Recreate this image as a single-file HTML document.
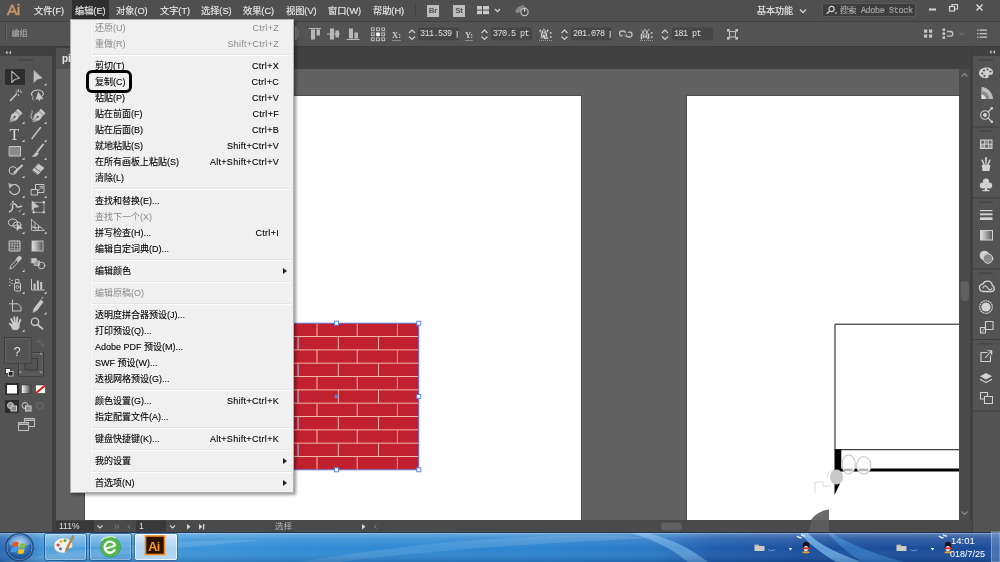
<!DOCTYPE html>
<html lang="zh-CN">
<head>
<meta charset="utf-8">
<title>Adobe Illustrator</title>
<style>
*{box-sizing:border-box;margin:0;padding:0}
html,body{width:1000px;height:562px;overflow:hidden;background:#535353}
body{position:relative;font-family:"Liberation Sans","Noto Sans CJK SC",sans-serif;font-size:9px;color:#d8d8d8;-webkit-font-smoothing:antialiased}
.abs{position:absolute}
#menubar{left:0;top:0;width:1000px;height:21px;background:#4f4f4f}
#menubar .mi{position:absolute;top:.5px;height:20px;line-height:20px;font-size:9.2px;color:#e8e8e8;white-space:nowrap;-webkit-text-stroke:.15px #e8e8e8}
#ctrl{left:0;top:20.5px;width:1000px;height:26.5px;background:#535353;border-top:1.5px solid #414141;border-bottom:1px solid #3c3c3c}
#tabbar{left:0;top:47px;width:1000px;height:22px;background:#414141}
#canvas{left:56px;top:69px;width:903px;height:451px;background:#616161;overflow:hidden}
.art{position:absolute;background:#fff;box-shadow:0 0 0 1px #4e4e4e}
#tools{left:0;top:47px;width:52px;height:485px;background:#535353}
#toolsgap{left:52px;top:47px;width:4px;height:485px;background:#3f3f3f}
#status{left:56px;top:520px;width:916px;height:11px;background:#3c3c3c}
#vscroll{left:959px;top:69px;width:11px;height:451px;background:#4b4b4b}
#rgap{left:970px;top:47px;width:3px;height:485px;background:#3f3f3f}
#rpanel{left:973px;top:56px;width:27px;height:476px;background:#535353}
#taskbar{left:0;top:531px;width:1000px;height:31px;background:linear-gradient(90deg,#4a97d6 0%,#3f8fd2 25%,#2f7fca 45%,#2467b6 60%,#1d55a3 75%,#1c4f9b 100%)}
/* dropdown menu */
#menu{left:70px;top:19px;width:224px;height:474px;background:#f0f0f0;border:1px solid #b0b0b0;box-shadow:2px 2px 3px rgba(0,0,0,.4);color:#000}
#menu .it{position:absolute;left:0;width:222px;height:16px;line-height:16px;font-size:9px;white-space:nowrap;-webkit-text-stroke:.1px currentColor}
#menu .it .l{position:absolute;left:24px;top:0}
#menu .it .r{position:absolute;right:14px;top:0;letter-spacing:.3px}
#menu .it.dis{color:#8a8a8a;-webkit-text-stroke:0}
#menu .sep{position:absolute;left:21px;width:199px;background:#e5e5e5;border-bottom:1px solid #fcfcfc;height:2px}
#menu .arr{position:absolute;right:6px;top:5px;width:0;height:0;border-left:4px solid #222;border-top:3px solid transparent;border-bottom:3px solid transparent}

#menu .gut{position:absolute;left:19px;top:1px;height:470px;background:#eaeaea;border-right:1px solid #f8f8f8;width:2px}
#menu .hl{position:absolute;left:15px;top:50px;width:46px;height:23px;border:3px solid #000;border-radius:6px}
.ailogo{position:absolute;left:7px;top:-.5px;font-size:15.5px;line-height:20px;color:#cc9468;font-weight:400;letter-spacing:-0.6px;-webkit-text-stroke:.5px #cc9468}
.mhl{position:absolute;left:72px;top:0;width:37px;height:19px;background:#2f2f2f}

.ct{position:absolute;top:28.5px;height:13px;line-height:13px;font-size:9px;color:#d4d4d4;white-space:nowrap;overflow:hidden}
.ct.lb{font-family:"Liberation Serif","Noto Serif CJK SC",serif;font-size:8.5px;font-weight:bold;border-bottom:1px solid #8a8a8a;height:12px;line-height:12px;color:#cfcfcf}
.ct.lb.cj{font-size:10px;font-family:"Noto Serif CJK SC",serif;font-weight:900;top:27.5px;height:13px;border-bottom:1px dotted #9a9a9a}
.ct.nm{font-family:"Liberation Mono",monospace;font-size:8.5px;letter-spacing:-0.6px;color:#e0e0e0;top:27.5px}

.bx{top:5px;width:12px;height:12px;background:#bdbdbd;color:#555;font-size:8px;line-height:12px;text-align:center;font-weight:bold;letter-spacing:-0.3px}
.st{position:absolute;top:521px;height:11px;line-height:11px;font-size:8.5px;color:#e0e0e0;white-space:nowrap}
#root{position:absolute;left:0;top:0;width:1000px;height:562px;will-change:transform}
</style>
</head>
<body>
<div id="root">
<div id="menubar" class="abs">
<div class="ailogo">Ai</div>
<div class="mhl"></div>
<span class="mi" style="left:34px">文件(F)</span>
<span class="mi" style="left:75px">编辑(E)</span>
<span class="mi" style="left:116px">对象(O)</span>
<span class="mi" style="left:160px">文字(T)</span>
<span class="mi" style="left:201px">选择(S)</span>
<span class="mi" style="left:243px">效果(C)</span>
<span class="mi" style="left:286px">视图(V)</span>
<span class="mi" style="left:328px">窗口(W)</span>
<span class="mi" style="left:373px">帮助(H)</span>
<div class="abs" style="left:415px;top:3px;width:1px;height:14px;background:#434343"></div>
<div class="abs bx" style="left:427px">Br</div>
<div class="abs bx" style="left:453px">St</div>
<svg class="abs" style="left:476px;top:4px" width="60" height="14" viewBox="0 0 60 14">
<g fill="#c9c9c9"><rect x="1" y="2" width="5" height="3.6"/><rect x="1" y="6.6" width="5" height="3.6"/><rect x="7" y="2" width="6" height="3.6"/><rect x="7" y="6.6" width="6" height="3.6"/></g>
<path d="M19 5l2.5 2.5l2.5 -2.5" fill="none" stroke="#d0d0d0" stroke-width="1.3"/>
<g fill="#9a9a9a"><path d="M39 8c1-4 5-7 9-7c0 3-3 7-6 8z" opacity=".75"/><circle cx="48.5" cy="8" r="3.6" fill="#4a4a4a" stroke="#bdbdbd" stroke-width="1.2"/><rect x="48" y="3.2" width="1.2" height="4.5" fill="#d0d0d0"/></g>
</svg>
<span class="mi" style="left:757px;font-size:9px">基本功能</span>
<svg class="abs" style="left:798px;top:6px" width="10" height="10" viewBox="0 0 10 10"><path d="M2 3.5l3 3l3 -3" fill="none" stroke="#d0d0d0" stroke-width="1.3"/></svg>
<div class="abs" style="left:822px;top:3px;width:94px;height:14px;background:#3d3d3d;border:1px solid #5a5a5a;border-radius:2px"></div>
<svg class="abs" style="left:825px;top:4px" width="14" height="12" viewBox="0 0 14 12"><circle cx="6.5" cy="5" r="2.6" fill="none" stroke="#cfcfcf" stroke-width="1.2"/><path d="M4.5 7.2l-2.8 2.6" stroke="#cfcfcf" stroke-width="1.4"/><path d="M9.5 8.5h3l-1.5 1.6z" fill="#cfcfcf"/></svg>
<span class="mi" style="left:840px;font-size:8.5px;color:#757575;font-family:'Liberation Mono','Noto Sans CJK SC',monospace;letter-spacing:-0.4px">搜索 Adobe Stock</span>
<svg class="abs" style="left:920px;top:0" width="80" height="20" viewBox="0 0 80 20">
<rect x="9" y="8.500" width="7" height="2" fill="#d6d6d6"/>
<g fill="none" stroke="#d6d6d6" stroke-width="1.200"><rect x="29.500" y="6.500" width="5" height="4.500"/><path d="M32 6.500v-2h5.500v4.500h-3"/></g>
<path d="M56.500 4.500l6 6M62.500 4.500l-6 6" stroke="#d6d6d6" stroke-width="1.500"/>
</svg>

</div>
<div id="ctrl" class="abs"></div>
<svg class="abs" style="left:0;top:20px" width="1000" height="27" viewBox="0 0 1000 27">
<path d="M5.5 5v17" stroke="#3a3a3a" stroke-width="1" stroke-dasharray="1 1"/><path d="M6.5 5v17" stroke="#6e6e6e" stroke-width="1" stroke-dasharray="1 1"/>
<rect x="295" y="6" width="1.5" height="14" fill="#8a8a8a"/><rect x="297.5" y="9" width="1" height="8" fill="#777"/>
<rect x="309" y="8" width="12" height="1" fill="#b9b9b9"/><rect x="311" y="9.5" width="4" height="10" fill="#b9b9b9"/><rect x="316.5" y="9.5" width="3.5" height="6" fill="#b9b9b9"/>
<rect x="327" y="13.5" width="13" height="1" fill="#b9b9b9"/><rect x="330" y="8.5" width="4" height="11" fill="#b9b9b9"/><rect x="335.5" y="10.5" width="3.5" height="7" fill="#b9b9b9"/>
<rect x="346.5" y="19" width="13" height="1" fill="#b9b9b9"/><rect x="349" y="8.5" width="4" height="10" fill="#b9b9b9"/><rect x="354.5" y="12.5" width="3.5" height="6" fill="#b9b9b9"/>
<rect x="371.4" y="7.9" width="2.8" height="2.8" fill="none" stroke="#c4c4c4" stroke-width="0.9"/>
<rect x="371.4" y="12.9" width="2.8" height="2.8" fill="none" stroke="#c4c4c4" stroke-width="0.9"/>
<rect x="371.4" y="17.9" width="2.8" height="2.8" fill="none" stroke="#c4c4c4" stroke-width="0.9"/>
<rect x="376.6" y="7.9" width="2.8" height="2.8" fill="none" stroke="#c4c4c4" stroke-width="0.9"/>
<rect x="376.2" y="12.5" width="3.6" height="3.6" fill="#fff"/>
<rect x="376.6" y="17.9" width="2.8" height="2.8" fill="none" stroke="#c4c4c4" stroke-width="0.9"/>
<rect x="381.8" y="7.9" width="2.8" height="2.8" fill="none" stroke="#c4c4c4" stroke-width="0.9"/>
<rect x="381.8" y="12.9" width="2.8" height="2.8" fill="none" stroke="#c4c4c4" stroke-width="0.9"/>
<rect x="381.8" y="17.9" width="2.8" height="2.8" fill="none" stroke="#c4c4c4" stroke-width="0.9"/>
<rect x="418" y="7.5" width="41" height="13" rx="1.5" fill="#464646"/>
<rect x="491" y="7.5" width="41" height="13" rx="1.5" fill="#464646"/>
<rect x="571" y="7.5" width="41" height="13" rx="1.5" fill="#464646"/>
<rect x="672" y="7.5" width="41" height="13" rx="1.5" fill="#464646"/>
<path d="M409 13 l3 -3 l3 3 M409 16.5 l3 3 l3 -3" fill="none" stroke="#d0d0d0" stroke-width="1.2"/>
<path d="M481.5 13 l3 -3 l3 3 M481.5 16.5 l3 3 l3 -3" fill="none" stroke="#d0d0d0" stroke-width="1.2"/>
<path d="M561.5 13 l3 -3 l3 3 M561.5 16.5 l3 3 l3 -3" fill="none" stroke="#d0d0d0" stroke-width="1.2"/>
<path d="M662 13 l3 -3 l3 3 M662 16.5 l3 3 l3 -3" fill="none" stroke="#d0d0d0" stroke-width="1.2"/>
<g fill="none" stroke="#bdbdbd" stroke-width="1.3"><rect x="619.5" y="11" width="6" height="5" rx="2.5"/><rect x="626" y="12" width="6" height="5" rx="2.5"/><path d="M621 19l9 -10" stroke="#535353" stroke-width="1.6"/></g>
<g fill="#c4c4c4"><rect x="727" y="9" width="2.6" height="2.6"/><rect x="735.4" y="9" width="2.6" height="2.6"/><rect x="727" y="17" width="2.6" height="2.6"/><rect x="735.4" y="17" width="2.6" height="2.6"/><rect x="729.5" y="11.6" width="6" height="5.4" fill="none" stroke="#c4c4c4" stroke-width="1"/></g>
<g fill="#c4c4c4"><rect x="924" y="9.5" width="3.2" height="3.2"/><rect x="929" y="9.5" width="3.2" height="3.2"/><rect x="924" y="14.5" width="3.2" height="3.2"/><rect x="929" y="14.5" width="3.2" height="3.2"/></g>
<g fill="#c4c4c4"><rect x="942.5" y="8.5" width="2.6" height="2.6"/><rect x="942.5" y="12.4" width="2.6" height="2.6"/><rect x="942.5" y="16.3" width="2.6" height="2.6"/></g><path d="M947 11.5h3.5a2.3 2.3 0 0 1 0 4.6H947" fill="none" stroke="#c4c4c4" stroke-width="1.3"/>
<path d="M959.5 12.5l2.5 2.5l2.5 -2.5" fill="none" stroke="#6f6f6f" stroke-width="1.1"/>
<g fill="#c4c4c4"><rect x="977" y="9.5" width="1.5" height="1.3"/><rect x="979.5" y="9.5" width="7.5" height="1.3"/><rect x="977" y="13" width="1.5" height="1.3"/><rect x="979.5" y="13" width="7.5" height="1.3"/><rect x="977" y="16.5" width="1.5" height="1.3"/><rect x="979.5" y="16.5" width="7.5" height="1.3"/></g>
</svg>
<span class="ct" style="left:11.5px;top:27px;font-size:8px;color:#bdbdbd">编组</span>
<span class="ct lb" style="left:392px">X:</span>
<span class="ct nm" style="left:420px;width:38px">311.539 p</span>
<span class="ct lb" style="left:465px">Y:</span>
<span class="ct nm" style="left:493px;width:38px">370.5 pt</span>
<span class="ct lb cj" style="left:539px">宽:</span>
<span class="ct nm" style="left:573px;width:38px">201.078 p</span>
<span class="ct lb cj" style="left:640px">高:</span>
<span class="ct nm" style="left:674px;width:38px">181 pt</span>
<div id="tabbar" class="abs"></div>
<div class="abs" style="left:54px;top:48px;width:180px;height:21px;background:#515151;color:#e6e6e6;font-size:10px;line-height:21px;padding-left:8px;font-weight:bold;overflow:hidden;white-space:nowrap">pi</div>
<div id="canvas" class="abs">
  <div class="art" style="left:29px;top:27px;width:496px;height:424px"></div>
  <div class="art" style="left:631px;top:27px;width:272px;height:424px"></div>
</div>
<!--ART--><svg class="abs" style="left:56px;top:69px" width="903" height="451" viewBox="56 69 903 451">
<rect x="257.9" y="323.2" width="160.9" height="146.6" fill="#c1202e"/>
<path d="M257.9 336.53H418.8 M257.9 349.86H418.8 M257.9 363.19H418.8 M257.9 376.52H418.8 M257.9 389.85H418.8 M257.9 403.18H418.8 M257.9 416.51H418.8 M257.9 429.84H418.8 M257.9 443.17H418.8 M257.9 456.50H418.8 M276.78 323.20V336.53 M317.00 323.20V336.53 M357.22 323.20V336.53 M397.44 323.20V336.53 M298.10 336.53V349.86 M338.32 336.53V349.86 M378.54 336.53V349.86 M276.78 349.86V363.19 M317.00 349.86V363.19 M357.22 349.86V363.19 M397.44 349.86V363.19 M298.10 363.19V376.52 M338.32 363.19V376.52 M378.54 363.19V376.52 M276.78 376.52V389.85 M317.00 376.52V389.85 M357.22 376.52V389.85 M397.44 376.52V389.85 M298.10 389.85V403.18 M338.32 389.85V403.18 M378.54 389.85V403.18 M276.78 403.18V416.51 M317.00 403.18V416.51 M357.22 403.18V416.51 M397.44 403.18V416.51 M298.10 416.51V429.84 M338.32 416.51V429.84 M378.54 416.51V429.84 M276.78 429.84V443.17 M317.00 429.84V443.17 M357.22 429.84V443.17 M397.44 429.84V443.17 M298.10 443.17V456.50 M338.32 443.17V456.50 M378.54 443.17V456.50 M276.78 456.50V469.83 M317.00 456.50V469.83 M357.22 456.50V469.83 M397.44 456.50V469.83" stroke="#f2b9a7" stroke-width="1" fill="none"/>
<path d="M397.4 323.20V336.53 M298.1 337.53V348.86 M397.4 349.86V363.19 M298.1 364.19V375.52 M397.4 376.52V389.85 M298.1 390.85V402.18 M397.4 403.18V416.51 M298.1 417.51V428.84 M397.4 429.84V443.17 M298.1 444.17V455.50 M397.4 456.50V469.83" stroke="#8a84d0" stroke-width="1" fill="none" opacity=".8"/>
<path d="M257.9 323.2H418.8V469.8H257.9" stroke="#5a78e8" stroke-width=".9" fill="none"/>
<rect x="334.5" y="321.2" width="4" height="4" fill="#fff" stroke="#4f7df0" stroke-width=".9"/>
<rect x="416.8" y="321.2" width="4" height="4" fill="#fff" stroke="#4f7df0" stroke-width=".9"/>
<rect x="416.8" y="394.5" width="4" height="4" fill="#fff" stroke="#4f7df0" stroke-width=".9"/>
<rect x="334.5" y="467.8" width="4" height="4" fill="#fff" stroke="#4f7df0" stroke-width=".9"/>
<rect x="416.8" y="467.8" width="4" height="4" fill="#fff" stroke="#4f7df0" stroke-width=".9"/>
<rect x="334.8" y="394.8" width="3.4" height="3.4" fill="#4f7df0"/>
<g fill="none" stroke="#111" stroke-width="1"><path d="M959 324.200H835V450"/><path d="M835 449.700H959"/></g>
<path d="M834.500 449.500h6.800v20.500l-1.500 14l-5.300 11z" fill="#000"/>
<path d="M841 470H959" stroke="#000" stroke-width="3"/>
<g fill="#fff" stroke="#cdcdcd" stroke-width="1.2"><path d="M829 531V506l5.500-11l7-9v-12h53v57z" stroke="none"/><ellipse cx="848.700" cy="464.300" rx="6.600" ry="9.500"/><ellipse cx="863.800" cy="465.200" rx="7.100" ry="8.600"/><path d="M815 493v-11h8v4h8" stroke="#dadada" stroke-width="1"/></g>
<ellipse cx="836.500" cy="477" rx="6.600" ry="7.600" fill="#c9c9c9"/><path d="M827.500 477a9 9 0 0 1 6 -8" stroke="#e0e0e0" fill="none"/>
<rect x="844" y="468.600" width="8.500" height="2.600" fill="#b5b5b5"/><rect x="859" y="468.600" width="9" height="2.600" fill="#b5b5b5"/>
<path d="M829 509.500C821 510.500 814 515 811 520H829z" fill="#6a6a6a"/>
</svg><!--/ART-->
<div id="vscroll" class="abs"></div>
<div id="tools" class="abs"></div>
<div id="toolsgap" class="abs"></div>
<!--TOOLS--><svg class="abs" style="left:0;top:47px" width="56" height="484" viewBox="0 47 56 484">
<rect x="0" y="47" width="52" height="9" fill="#404040"/>
<path d="M7.5 50.5l-2 2l2 2zM11 50.5l-2 2l2 2z" fill="#c8c8c8"/>
<rect x="18" y="59" width="15" height="1.5" fill="#454545"/>
<rect x="5" y="69" width="20" height="16" rx="1.5" fill="#2e2e2e"/>
<g fill="none" stroke="#c8c8c8" stroke-width="1.2" stroke-linejoin="round" stroke-linecap="round">
<!-- R1 selection -->
<path d="M11.800 71.200v11.300l2.900 -3l4.800 -1.200z" stroke="#b4b4b4" stroke-width="1.100"/>
<path d="M34 71v11.500l3 -3.300l4.800 -1.100z" fill="#c0c0c0" stroke="#c0c0c0" stroke-width=".7"/>
<!-- R2 wand / lasso -->
<path d="M10.5 100.5l6 -6.5" stroke-width="1.6"/><path d="M18.5 89.5v2M18.500 94.500v1M16 92h1M20.500 92h1.500M16.8 90.200l.6 .6M20.6 90.200l-.6 .6" stroke-width=".9"/>
<path d="M32 95.500c-1.500-2.500 1-5.500 5.500-5.500s7 2.500 5.500 5c-1 1.600-3 2.200-4.500 2.200" stroke-width="1.100"/><path d="M38.300 91.500l5.500 7.500l-3.300 .2l-1.200 2.600l-1.600 -2.800l-2.600 1.500z" fill="#c8c8c8" stroke="#535353" stroke-width=".5"/><path d="M33 96.500c-1 1 -.5 2.500 .5 3.500" stroke-width=".9"/>
<!-- R3 pen / curvature -->
<path d="M10 121.500l1.600 -6.800l4.200 -3l3.800 3.800l-3 4.200z" fill="#c8c8c8" stroke-width=".6"/><path d="M16.300 110.800l1.700 -1.700l4.200 4.200l-1.700 1.700z" fill="#c8c8c8" stroke-width=".6"/><path d="M10.300 121.200l3.600 -3.600" stroke="#535353" stroke-width=".8"/><circle cx="14.600" cy="116.900" r="1.100" fill="#535353" stroke="none"/>
<path d="M33 121.500l1.600 -6.800l4.200 -3l3.800 3.800l-3 4.200z" fill="#c8c8c8" stroke-width=".6"/><path d="M39.300 110.800l1.700 -1.700l4.200 4.200l-1.700 1.700z" fill="#c8c8c8" stroke-width=".6"/><path d="M33.300 121.200l3.600 -3.600" stroke="#535353" stroke-width=".8"/><circle cx="37.600" cy="116.900" r="1.100" fill="#535353" stroke="none"/><path d="M32 110.500c1.500 1.500 -1.500 4 -1 6.500c.4 2 2 3 3 2.500" stroke-width=".9"/>
<!-- R4 type / line -->
<path d="M40.500 127.500l-8.500 11" stroke-width="1.400"/>
<!-- R5 rect / brush -->
<rect x="9.500" y="146.500" width="11" height="9.500" fill="#8a8a8a" stroke-width="1"/>
<path d="M43 144.500l-5.500 7" stroke-width="2"/><path d="M36.800 152l-1.500 1.200c-1 .8 -1.200 2.200 -2.800 3c2.200 .6 4 0 4.800 -1.200l1 -1.600z" fill="#c8c8c8" stroke-width=".6"/>
<!-- R6 shaper / eraser -->
<circle cx="13" cy="170.500" r="3.800" stroke-width="1.100"/><path d="M14.500 172.500l7.500 -7" stroke-width="2"/>
<path d="M32.500 170l6 -6l5.500 4l-6 6.500z" fill="#c8c8c8" stroke-width=".7"/><path d="M32.500 170l3.200 2.600" stroke="#535353" stroke-width=".1"/><path d="M32.300 170.300l5.700 4.200" stroke-width=".4" stroke="#535353"/><path d="M34.800 167.700l5.600 4.200" stroke="#535353" stroke-width=".9"/>
<!-- R7 rotate / scale -->
<path d="M11.500 185.500a5 5 0 1 1 -1.800 5.500" stroke-width="1.200"/><path d="M9 183.500l3.500 1.800l-2.700 2.600z" fill="#c8c8c8" stroke-width=".5"/>
<rect x="31.500" y="189.500" width="6" height="5.500" stroke-width="1"/><path d="M35.500 189v-4.500h8.500v8h-6" stroke-width="1"/><path d="M38 191l4 -4.500M39.800 186.300h2.400v2.400" stroke-width=".9"/>
<!-- R8 width / free transform -->
<g transform="translate(0 1.300)">
<path d="M9.500 210.500c2.500-1 3.500-3.500 3-5.500c-.4-1.800 1-2.800 2.500-2.300c1.600.6 1.200 2.400 2.600 3c1.400.5 2.600-.8 4-.7" stroke-width="1.500"/><path d="M10 203.500l2 -2M19 210.500l2 -2" stroke-width=".9"/><circle cx="13" cy="200.500" r="1" fill="#c8c8c8" stroke="none"/>
<rect x="33.500" y="201" width="10.500" height="10" stroke-width=".8" stroke-dasharray="1.200 1"/><path d="M32 200v9l2.500 -2.700l4 -.8z" fill="#c8c8c8" stroke-width=".6"/><rect x="42.800" y="199.800" width="2.200" height="2.200" fill="#c8c8c8" stroke="none"/><rect x="42.800" y="209.800" width="2.200" height="2.200" fill="#c8c8c8" stroke="none"/><rect x="32.500" y="209.800" width="2.200" height="2.200" fill="#c8c8c8" stroke="none"/>
</g>
<!-- R9 shape builder / perspective -->
<ellipse cx="13" cy="222.500" rx="4.500" ry="3.500" stroke-width="1"/><ellipse cx="17" cy="225" rx="4" ry="3.200" stroke-width="1"/><path d="M17 224v6.500l1.800 -1.800l3.200 -.4z" fill="#c8c8c8" stroke-width=".6"/>
<path d="M31.500 219.500v11l13 -0l-13 -11zM31.500 225l7 5.500M35 222.500v8M38.500 225.500v5M31.500 227.500h9.500" stroke-width=".8"/>
<!-- R10 mesh / gradient -->
<rect x="9.500" y="241" width="10.500" height="10" stroke-width="1"/><path d="M9.500 246c3-1.500 7 1.500 10.500 0M14.700 241c1.500 3-1.500 7 0 10M9.500 243.500c3 1 7-1 10.500 0M9.500 248.800c3-1 7 1 10.500 0M12 241c1 3-1 7 0 10M17.500 241c-1 3 1 7 0 10" stroke-width=".6"/>
<!-- R11 eyedropper / blend -->
<path d="M10 268.500l1 -3l5.500 -5.500l2 2l-5.500 5.500z" stroke-width="1"/><path d="M16 259l2.200 -2.200c.8-.8 2.200-.6 2.800.2c.6.800.6 2 -.2 2.600l-2.200 2z" fill="#c8c8c8" stroke-width=".6"/>
<rect x="31.500" y="258.500" width="5" height="4.500" fill="#c8c8c8" stroke-width=".5"/><rect x="34.500" y="261" width="5" height="4.500" fill="#9a9a9a" stroke-width=".7"/><circle cx="41.500" cy="265.500" r="3.300" stroke-width="1"/>
<!-- R12 sprayer / graph -->
<rect x="14.500" y="283" width="6" height="8" rx="1" stroke-width="1"/><rect x="16" y="279.500" width="3" height="3" stroke-width=".9"/><circle cx="17.500" cy="287" r="1.500" stroke-width=".8"/><path d="M9.500 279h.5M11.800 280.500h.5M9.500 282h.5M11.800 283.500h.5M9.500 285.500h.5" stroke-width="1.200"/>
<path d="M31.500 279.500v10.500h13" stroke-width="1"/><path d="M34.600 289.500v-6M37.900 289.500v-9M41.200 289.500v-7.500" stroke-width="2" stroke-linecap="butt"/>
<!-- R13 artboard / slice -->
<path d="M12.500 300v11M9.500 303.800h8.500l3 3v4.200h-8.500" stroke-width="1"/>
<path d="M33 312l1.200 -3.500l6.500 -8.500l2.500 2l-6.500 8.500z" fill="#c8c8c8" stroke-width=".7"/><path d="M41.500 299l1.500 -1.800" stroke-width="1"/>
<!-- R14 hand / zoom -->
<g stroke-width="1.900"><path d="M13.500 324l-2.300 -5M15 323.500l-.7 -6.200M16.800 323.500l.5 -6M18.500 324.500l1.800 -4.700M12.500 326.500l-2.800 -2.800"/></g><path d="M11.800 324.500c1.500-1.800 6-1.800 7.500.2c.6 1.800-.4 3.600-1.800 5h-4.500c-1.200-1.200-2-3.400-1.200-5.200z" fill="#c8c8c8" stroke-width=".5"/>
<circle cx="35" cy="321.800" r="3.700" stroke-width="1.300"/><path d="M37.800 324.800l4.700 4" stroke-width="1.800"/>
</g>
<!-- gradient tool fill -->
<defs><linearGradient id="gt" x1="0" x2="1"><stop offset="0" stop-color="#e8e8e8"/><stop offset="1" stop-color="#555"/></linearGradient>
<linearGradient id="gt2" x1="0" x2="1"><stop offset="0" stop-color="#fff"/><stop offset="1" stop-color="#444"/></linearGradient></defs>
<rect x="32" y="241" width="11" height="10" fill="url(#gt)" stroke="#c8c8c8" stroke-width=".9"/>
<text x="9.500" y="139.500" font-family="Liberation Serif,serif" font-size="16" fill="#d8d8d8">T</text>
<!-- sub-tool triangles -->
<g fill="#cfcfcf">
<path d="M46.500 85.500v-2.500l-2.500 2.500z"/>
<path d="M24.500 124v-2.500l-2.500 2.500zM46.500 124v-2.500l-2.500 2.500z"/>
<path d="M24.500 142v-2.500l-2.500 2.500zM46.500 142v-2.500l-2.500 2.500z"/>
<path d="M24.500 160v-2.500l-2.500 2.500zM46.500 160v-2.500l-2.500 2.500z"/>
<path d="M24.500 178v-2.500l-2.500 2.500zM46.500 178v-2.500l-2.500 2.500z"/>
<path d="M24.500 198v-2.500l-2.500 2.500zM46.500 198v-2.500l-2.500 2.500z"/>
<path d="M24.500 215v-2.500l-2.500 2.500z"/>
<path d="M24.500 234v-2.500l-2.500 2.500zM46.500 234v-2.500l-2.500 2.500z"/>
<path d="M24.500 272v-2.500l-2.500 2.500z"/>
<path d="M24.500 294v-2.500l-2.500 2.500zM46.500 294v-2.500l-2.500 2.500z"/>
<path d="M46.500 314.500v-2.500l-2.500 2.500z"/>
<path d="M24.500 332v-2.500l-2.500 2.500z"/>
</g>
<!-- fill / stroke -->
<g>
<path d="M18.500 352.500h25v23.500h-25z" fill="#565656" stroke="#3a3a3a" stroke-width="1"/>
<path d="M25 358.500h12.500v11.500h-12.500z" fill="#535353" stroke="#3a3a3a" stroke-width="1"/>
<path d="M19.500 353.500h23v21.500h-23z" fill="none" stroke="#646464" stroke-width="1"/>
<rect x="4.500" y="337.500" width="26.500" height="25.500" fill="#535353" stroke="#3c3c3c" stroke-width="1"/>
<rect x="5.500" y="338.500" width="24.500" height="23.500" fill="none" stroke="#626262" stroke-width="1"/>
<text x="13.500" y="355.500" font-family="Liberation Sans,sans-serif" font-size="13" fill="#e0e0e0">?</text>
<path d="M38 341.500c2.500-.5 4.500 1 4.500 3.500" fill="none" stroke="#6a6a6a" stroke-width="1"/><path d="M36.500 341.500l2.500 -1.800v3.600zM42.500 347l-1.800 -2.500h3.600z" fill="#6a6a6a"/>
<rect x="5.500" y="368.500" width="5" height="5" fill="#fff" stroke="#222" stroke-width=".8"/><rect x="8.500" y="371.500" width="4.500" height="4.500" fill="#222" stroke="#ddd" stroke-width=".8"/>
<path d="M20.500 370.500l1.500 2.500h-3zM41 370.500l1.500 2.500h-3zM41 352l1.500 2.500h-3z" fill="#999"/>
</g>
<!-- color mode -->
<rect x="5" y="383" width="14" height="12" fill="#2e2e2e"/>
<rect x="7" y="385" width="10" height="8.500" fill="#fff"/>
<rect x="21.500" y="385" width="9.500" height="8.500" fill="url(#gt2)" stroke="#333" stroke-width=".6"/>
<rect x="35.500" y="385" width="10" height="8.500" fill="#fff" stroke="#333" stroke-width=".6"/><path d="M36 393l9 -7.500" stroke="#e0241b" stroke-width="2.200"/>
<!-- draw modes -->
<rect x="5" y="400" width="14" height="13" fill="#2e2e2e"/>
<g fill="none" stroke="#cfcfcf" stroke-width="1">
<circle cx="10.500" cy="405.500" r="3" fill="#8a8a8a"/><rect x="11" y="406" width="5.500" height="5" fill="#8a8a8a"/>
<circle cx="25" cy="405.500" r="3" /><rect x="25.500" y="406" width="5.500" height="5" fill="#8a8a8a"/>
<circle cx="39.500" cy="405.500" r="3" stroke="#6c6c6c"/><rect x="37" y="403" width="7" height="6.500" stroke="#6c6c6c" stroke-dasharray="1 1"/>
</g>
<!-- screen mode -->
<g fill="#535353" stroke="#bdbdbd" stroke-width="1.100"><rect x="24.500" y="418.500" width="10" height="8"/><rect x="18.500" y="422.500" width="10" height="8"/><path d="M24.500 420.200h10M18.500 424.200h10" stroke-width="1.500"/></g>
</svg>
<!--/TOOLS-->
<div id="rgap" class="abs"></div>
<div id="rpanel" class="abs"></div>
<!--RIGHT--><svg class="abs" style="left:956px;top:47px" width="44" height="484" viewBox="956 47 44 484">
<path d="M991.500 50l-2 2l2 2zM995 50l-2 2l2 2z" fill="#c8c8c8"/>
<g fill="#454545"><rect x="979" y="59.500" width="14" height="1.500"/><rect x="979" y="130.500" width="14" height="1.500"/><rect x="979" y="201.500" width="14" height="1.500"/><rect x="979" y="272.500" width="14" height="1.500"/><rect x="979" y="343" width="14" height="1.500"/></g>
<g fill="#3e3e3e"><rect x="973" y="126.500" width="27" height="1"/><rect x="973" y="197.500" width="27" height="1"/><rect x="973" y="268.500" width="27" height="1"/><rect x="973" y="339" width="27" height="1"/><rect x="973" y="410.500" width="27" height="1"/></g>
<!-- scroll arrows + thumb -->
<path d="M961.500 76.500l3 -3l3 3M961.500 511.500l3 3l3 -3" fill="none" stroke="#8a8a8a" stroke-width="1.200"/>
<rect x="960.500" y="281" width="8.500" height="20" rx="4" fill="#606060"/>
<g fill="none" stroke="#d2d2d2" stroke-width="1.100" stroke-linejoin="round" stroke-linecap="round">
<!-- palette -->
<path d="M986.500 67.500c4 0 6.500 2 6.500 5c0 2-1.500 2.500-3 2.300c-1.200-.2-1.800.5-1.500 1.400c.4 1.200-.6 2-2.500 2c-4 0-7-2-7-5.200c0-3.200 3.500-5.500 7.500-5.500z" fill="#d2d2d2" stroke="none"/>
<g fill="#535353" stroke="none"><circle cx="982.200" cy="73.500" r="1.100"/><circle cx="984.500" cy="75.800" r="1.100"/><circle cx="984" cy="70.500" r="1.100"/><circle cx="987.500" cy="69.500" r="1.100"/><circle cx="990.500" cy="71.500" r="1.100"/></g>
<!-- color guide -->
<path d="M981.500 99v-12c6 0 11 5 11.500 12z" fill="#bdbdbd" stroke="none"/><path d="M981.500 99v-8c4 0 7.500 3.500 8 8z" fill="#8d8d8d" stroke="none"/><path d="M981.500 99v-4.500c2.200 0 4 2 4.300 4.500z" fill="#e0e0e0" stroke="none"/>
<!-- recolor -->
<circle cx="985" cy="115" r="4.300"/><circle cx="985" cy="115" r="1.400" fill="#d2d2d2"/><path d="M988 112l3.500 -3.500M988 118l3.500 3.500"/><circle cx="991.800" cy="108.200" r="1.300" fill="#d2d2d2" stroke="none"/><circle cx="991.800" cy="121.800" r="1.300" fill="#d2d2d2" stroke="none"/>
<!-- swatches -->
<g stroke="none"><rect x="980" y="139.500" width="12.500" height="9.500" fill="#cfcfcf"/><rect x="981.200" y="140.700" width="3" height="3" fill="#6a6a6a"/><rect x="985" y="140.700" width="3" height="3" fill="#8a8a8a"/><rect x="988.700" y="140.700" width="2.800" height="3" fill="#6a6a6a"/><rect x="981.200" y="144.700" width="3" height="3" fill="#9a9a9a"/><rect x="985" y="144.700" width="3" height="3" fill="#6a6a6a"/><rect x="988.700" y="144.700" width="2.800" height="3" fill="#8a8a8a"/></g>
<!-- brushes -->
<g stroke="none" fill="#d2d2d2"><path d="M982.500 171h7l.8 -6h-8.600z"/><path d="M985.500 165l-.5 -7c0-1.500 2-1.500 2 0l-.5 7z"/><path d="M983.500 165.500l-2 -5c-.4-1 1-1.600 1.500-.6l2 5z"/><path d="M988.500 165.500l2 -5c.4-1-1-1.600-1.500-.6l-2 5z"/></g>
<!-- symbols club -->
<g stroke="none" fill="#d2d2d2"><circle cx="986" cy="181.500" r="3"/><circle cx="982.800" cy="185.500" r="3"/><circle cx="989.200" cy="185.500" r="3"/><path d="M985.300 185h1.400l.8 5h2v1.200h-7v-1.200h2z"/></g>
<!-- stroke -->
<g stroke="none" fill="#d2d2d2"><rect x="980" y="210" width="12.500" height="1.200"/><rect x="980" y="213.300" width="12.500" height="2"/><rect x="980" y="217.300" width="12.500" height="2.700"/></g>
<!-- transparency -->
<circle cx="984.500" cy="255.500" r="4.800" fill="#d2d2d2" stroke="none"/><circle cx="988" cy="258.500" r="4.800" fill="#8a8a8a" stroke="#d2d2d2" stroke-width="1"/>
<!-- cc libraries -->
<path d="M983.500 291.500c-2.500 0-4-1.800-4-3.700c0-2 1.500-3.500 3.300-3.600c.8-2 2.600-3 4.600-3c2.600 0 4.600 1.800 4.900 4.200c1.300.5 2 1.700 2 3c0 1.800-1.400 3.100-3.200 3.100z" stroke-width="1.300"/><path d="M983 288c0-2 2.500-2.800 3.800-1.200l1.800 2c1.200 1.500 3.500.7 3.500-1.100" stroke-width="1.100"/>
<!-- appearance sun -->
<circle cx="986" cy="307" r="4.600" fill="#d2d2d2" stroke="none"/><circle cx="986" cy="307" r="6.300" stroke-width="1.200" stroke-dasharray=".9 1.500"/>
<!-- graphic styles -->
<rect x="985.500" y="321.500" width="7.500" height="8"/><rect x="980.500" y="327.500" width="5" height="5.500"/><path d="M982 332l2.500 -3.500" stroke-width=".8"/>
<!-- export -->
<path d="M987 352.500h-6v9h9.500v-5.500"/><path d="M985.500 357.500l6 -6.500M988 350.800h3.700v3.700"/>
<!-- layers -->
<path d="M986 373l6 3.200l-6 3.200l-6 -3.200z" fill="#d2d2d2" stroke="none"/><path d="M980.500 379.500l5.500 3l5.500 -3" stroke-width="1.300"/>
<!-- artboards -->
<rect x="980.500" y="392.500" width="7" height="6.500"/><rect x="984.500" y="396.500" width="8" height="7" fill="#535353"/>
</g>
<defs><linearGradient id="gp" x1="0" x2="1"><stop offset="0" stop-color="#e6e6e6"/><stop offset="1" stop-color="#555"/></linearGradient></defs>
<rect x="980.500" y="230.500" width="12" height="9.500" fill="url(#gp)" stroke="#d2d2d2" stroke-width="1"/>
</svg>
<!--/RIGHT-->
<!--BOT--><svg class="abs" style="left:0;top:520px" width="1000" height="42" viewBox="0 520 1000 42">
<defs>
<linearGradient id="tb" x1="0" x2="1"><stop offset="0" stop-color="#2a69b4"/><stop offset=".03" stop-color="#3480c6"/><stop offset=".046" stop-color="#479ddd"/><stop offset=".15" stop-color="#4098da"/><stop offset=".3" stop-color="#328cd4"/><stop offset=".55" stop-color="#2c83ce"/><stop offset=".66" stop-color="#2878c4"/><stop offset=".71" stop-color="#1f5dac"/><stop offset=".8" stop-color="#1a4f9d"/><stop offset="1" stop-color="#1b4b97"/></linearGradient>
<linearGradient id="tbv" x1="0" y1="0" x2="0" y2="1"><stop offset="0" stop-color="#fff" stop-opacity=".32"/><stop offset=".2" stop-color="#fff" stop-opacity=".12"/><stop offset=".55" stop-color="#fff" stop-opacity="0"/><stop offset="1" stop-color="#001a40" stop-opacity=".18"/></linearGradient>
<radialGradient id="orb" cx=".5" cy=".35" r=".7"><stop offset="0" stop-color="#9fd0f5"/><stop offset=".45" stop-color="#3a7fc8"/><stop offset="1" stop-color="#123a7a"/></radialGradient>
<linearGradient id="btn" x1="0" y1="0" x2="0" y2="1"><stop offset="0" stop-color="#fff" stop-opacity=".3"/><stop offset=".5" stop-color="#fff" stop-opacity=".13"/><stop offset=".52" stop-color="#fff" stop-opacity=".04"/><stop offset="1" stop-color="#fff" stop-opacity=".14"/></linearGradient>
<linearGradient id="btna" x1="0" y1="0" x2="0" y2="1"><stop offset="0" stop-color="#fff" stop-opacity=".8"/><stop offset=".5" stop-color="#eaf4ff" stop-opacity=".62"/><stop offset="1" stop-color="#dff0ff" stop-opacity=".75"/></linearGradient>
</defs>
<!-- status bar -->
<rect x="56" y="520" width="916" height="13" fill="#4a4a4a"/>
<rect x="56" y="520.500" width="38" height="11" fill="#393939"/>
<rect x="136" y="520.500" width="30" height="11" fill="#393939"/>
<path d="M97.500 525.500l2.500 2.500l2.500 -2.500M170 525.500l2.500 2.500l2.500 -2.500" fill="none" stroke="#cfcfcf" stroke-width="1.200"/>
<g fill="#676767"><path d="M119 524v5.500l-3 -2.750zM115 524h1v5.500h-1zM130 524v5.500l-3 -2.750z"/></g>
<g fill="#d6d6d6"><path d="M187 524v5.500l3.500 -2.750zM199 524v5.500l3.500 -2.750zM203 524h1.300v5.500h-1.300zM362 524v5.500l3.500 -2.750z"/></g>
<path d="M376.500 524.500l-2 2l2 2" fill="none" stroke="#8a8a8a" stroke-width=".9"/>
<rect x="661" y="522.5" width="21" height="8" rx="4" fill="#606060"/>
<path d="M829 520H811.500L809 532H829z" fill="#5d5d5d"/>
<!-- taskbar -->
<rect x="0" y="532.5" width="1000" height="29.5" fill="url(#tb)"/>
<clipPath id="tbc"><rect x="0" y="533" width="1000" height="29"/></clipPath><g clip-path="url(#tbc)"><path d="M300 562C380 548 470 538 560 536C600 535 630 536 650 538C620 540 580 541 540 544C460 549 380 556 340 562z" fill="#7db8e6" opacity=".28"/>
<path d="M0 562C80 548 170 540 260 540C200 546 120 554 60 562z" fill="#8cc4ee" opacity=".25"/>
<path d="M640 531C670 538 690 548 708 562H688C672 549 655 540 625 531z" fill="#79b6ea" opacity=".6"/>
<path d="M806 531C815 542 835 553 862 562H836C820 552 806 542 799 531z" fill="#6fb1e8" opacity=".8"/>
<path d="M829 531C850 545 880 556 905 562H862C848 553 836 543 826 531z" fill="#3f8fd8" opacity=".55"/>
</g>
<rect x="0" y="532.5" width="1000" height="29.5" fill="url(#tbv)"/>
<rect x="0" y="532" width="1000" height="1" fill="#1a2a45" opacity=".85"/>
<rect x="0" y="533" width="1000" height="1" fill="#b8dcf8" opacity=".35"/>
<!-- start orb -->
<circle cx="19.500" cy="547.200" r="14.300" fill="#143566" opacity=".75"/>
<circle cx="19.500" cy="547.200" r="12.600" fill="url(#orb)" stroke="#9cc8ee" stroke-opacity=".5" stroke-width="1"/><path d="M8.500 544a11.500 11.500 0 0 1 22 0c-6 3-16 3-22 0z" fill="#fff" opacity=".28"/>
<g><path d="M13 542.500c2-1 4-1 6 0l-1.200 4.600c-2-1-4-1-6 0z" fill="#e8542a"/><path d="M20.200 543c2 1 4 1 6 0l-1.200 4.600c-2 1-4 1-6 0z" fill="#7fc241"/><path d="M11.500 548.200c2-1 4-1 6 0l-1.200 4.600c-2-1-4-1-6 0z" fill="#3d9be0"/><path d="M18.700 548.700c2 1 4 1 6 0l-1.200 4.600c-2 1-4 1-6 0z" fill="#f8c21c"/></g>
<!-- task buttons -->
<rect x="44.500" y="533.500" width="42" height="27" rx="2" fill="url(#btn)" stroke="#1d4f8c" stroke-opacity=".8"/>
<rect x="45.500" y="534.500" width="40" height="25" rx="1.500" fill="none" stroke="#fff" stroke-opacity=".3"/>
<rect x="89.500" y="533.500" width="42" height="27" rx="2" fill="url(#btn)" stroke="#1d4f8c" stroke-opacity=".8"/>
<rect x="90.500" y="534.500" width="40" height="25" rx="1.500" fill="none" stroke="#fff" stroke-opacity=".3"/>
<rect x="134.500" y="533.500" width="43" height="27" rx="2" fill="url(#btna)" stroke="#2a5a94" stroke-opacity=".8"/>
<rect x="135.500" y="534.500" width="41" height="25" rx="1.500" fill="none" stroke="#fff" stroke-opacity=".7"/>
<!-- paint icon -->
<g><path d="M63 538c5.500 0 9.500 3 9.500 7c0 3-2 3.500-4 3.300c-1.600-.2-2.400.7-2 1.900c.5 1.700-.8 2.800-3.500 2.800c-5.500 0-9-3-9-7.200c0-4.300 4-7.800 9-7.800z" fill="#f3f3ee" stroke="#9aa7b4" stroke-width=".6"/><circle cx="58" cy="545" r="1.500" fill="#d8392b"/><circle cx="60.500" cy="548.800" r="1.500" fill="#3a78d0"/><circle cx="61" cy="541.500" r="1.500" fill="#f0b323"/><circle cx="65" cy="540.500" r="1.500" fill="#4aa83c"/><path d="M72.500 535.500l-6.500 13l-1 3.500l2.500 -2.500l6.500 -13z" fill="#c98c3c" stroke="#8a5a20" stroke-width=".4"/></g>
<!-- 360 browser icon -->
<circle cx="110.500" cy="547" r="10" fill="#52b94a" stroke="#3a9a38" stroke-width=".7"/><circle cx="110" cy="547" r="9.500" fill="none"/><g transform="rotate(-18 110 547)"><path d="M115.500 547.200H105" stroke="#fff" stroke-width="2" fill="none"/><path d="M115.500 547.200A5.500 5.500 0 1 0 114 551" fill="none" stroke="#fff" stroke-width="2.300"/></g><path d="M101 541c3-4 10-5.500 15-3" fill="none" stroke="#e9f7c8" stroke-width="1.200"/>
<!-- Ai icon -->
<rect x="145.500" y="536" width="19" height="18.500" fill="#2b1203" stroke="#f08a1d" stroke-width="1.600"/>
<text x="148.300" y="550.500" font-family="Liberation Sans,sans-serif" font-weight="bold" font-size="12.500" fill="#f59a23" letter-spacing="-.5">Ai</text>
<!-- tray icons -->
<g id="tray">
<rect x="754.500" y="546" width="10" height="5" fill="#cfcdc2"/><rect x="754.500" y="544.600" width="4.500" height="1.800" fill="#bdbbb0"/>
<path d="M768 549.500c2 1.200 5 1.200 7 0" stroke="#7da6d8" stroke-width="1.200" fill="none" opacity=".7"/>
<path d="M790.500 547.500l1.800 2.500h-3.600z" fill="#fff" transform="rotate(180 790.500 549)"/>
<path d="M797 536c1.500 1.500 3 2 4.500 1.500M801 534.500c1.200 1.200 2.500 1.700 4 1.300" stroke="#dbe9ff" stroke-width="1.600" fill="none"/>
<ellipse cx="806" cy="546" rx="3.300" ry="4.200" fill="#15151b"/><ellipse cx="806" cy="548.500" rx="2.300" ry="2.600" fill="#fff"/><path d="M802.500 548c1.500-1 5.500-1 7 0l-.6 1.800c-1.800-.8-4-.8-5.800 0z" fill="#e33224"/><ellipse cx="806" cy="552.300" rx="3.600" ry="1" fill="#f0a020"/>
</g>
<use href="#tray" x="142" y="0"/>
<rect x="947" y="533" width="45" height="29" fill="#1d4f9c" opacity=".0"/>
<rect x="991.500" y="532" width="8.500" height="30" fill="#8db4dc" fill-opacity=".35" stroke="#cfe4f8" stroke-opacity=".6" stroke-width=".8"/>
<text x="951" y="544.300" font-family="Liberation Sans,sans-serif" font-size="9.500" fill="#fff">14:01</text>
<text x="950" y="557.200" font-family="Liberation Sans,sans-serif" font-size="9" fill="#fff">018/7/25</text>
</svg>
<span class="st" style="left:59px">111%</span>
<span class="st" style="left:139px">1</span>
<span class="st" style="left:275px;color:#b8b8b8;font-size:8.500px">选择</span>
<!--/BOT-->
<div id="menu" class="abs">
<div class="gut"></div>
<div class="it dis" style="top:0px"><span class="l">还原(U)</span><span class="r">Ctrl+Z</span></div>
<div class="it dis" style="top:16px"><span class="l">重做(R)</span><span class="r">Shift+Ctrl+Z</span></div>
<div class="sep" style="top:34px"></div>
<div class="it" style="top:38px"><span class="l">剪切(T)</span><span class="r">Ctrl+X</span></div>
<div class="it" style="top:54px"><span class="l">复制(C)</span><span class="r">Ctrl+C</span></div>
<div class="it" style="top:70px"><span class="l">粘贴(P)</span><span class="r">Ctrl+V</span></div>
<div class="it" style="top:86px"><span class="l">贴在前面(F)</span><span class="r">Ctrl+F</span></div>
<div class="it" style="top:102px"><span class="l">贴在后面(B)</span><span class="r">Ctrl+B</span></div>
<div class="it" style="top:118px"><span class="l">就地粘贴(S)</span><span class="r">Shift+Ctrl+V</span></div>
<div class="it" style="top:134px"><span class="l">在所有画板上粘贴(S)</span><span class="r">Alt+Shift+Ctrl+V</span></div>
<div class="it" style="top:150px"><span class="l">清除(L)</span></div>
<div class="sep" style="top:168px"></div>
<div class="it" style="top:173px"><span class="l">查找和替换(E)...</span></div>
<div class="it dis" style="top:189px"><span class="l">查找下一个(X)</span></div>
<div class="it" style="top:205px"><span class="l">拼写检查(H)...</span><span class="r">Ctrl+I</span></div>
<div class="it" style="top:221px"><span class="l">编辑自定词典(D)...</span></div>
<div class="sep" style="top:239px"></div>
<div class="it" style="top:243px"><span class="l">编辑颜色</span><i class="arr"></i></div>
<div class="sep" style="top:261px"></div>
<div class="it dis" style="top:265px"><span class="l">编辑原稿(O)</span></div>
<div class="sep" style="top:283px"></div>
<div class="it" style="top:287px"><span class="l">透明度拼合器预设(J)...</span></div>
<div class="it" style="top:303px"><span class="l">打印预设(Q)...</span></div>
<div class="it" style="top:319px"><span class="l">Adobe PDF 预设(M)...</span></div>
<div class="it" style="top:335px"><span class="l">SWF 预设(W)...</span></div>
<div class="it" style="top:351px"><span class="l">透视网格预设(G)...</span></div>
<div class="sep" style="top:369px"></div>
<div class="it" style="top:373px"><span class="l">颜色设置(G)...</span><span class="r">Shift+Ctrl+K</span></div>
<div class="it" style="top:389px"><span class="l">指定配置文件(A)...</span></div>
<div class="sep" style="top:407px"></div>
<div class="it" style="top:411px"><span class="l">键盘快捷键(K)...</span><span class="r">Alt+Shift+Ctrl+K</span></div>
<div class="sep" style="top:429px"></div>
<div class="it" style="top:433px"><span class="l">我的设置</span><i class="arr"></i></div>
<div class="sep" style="top:451px"></div>
<div class="it" style="top:455px"><span class="l">首选项(N)</span><i class="arr"></i></div>
<div class="hl"></div>
</div>
</div>
</body>
</html>
